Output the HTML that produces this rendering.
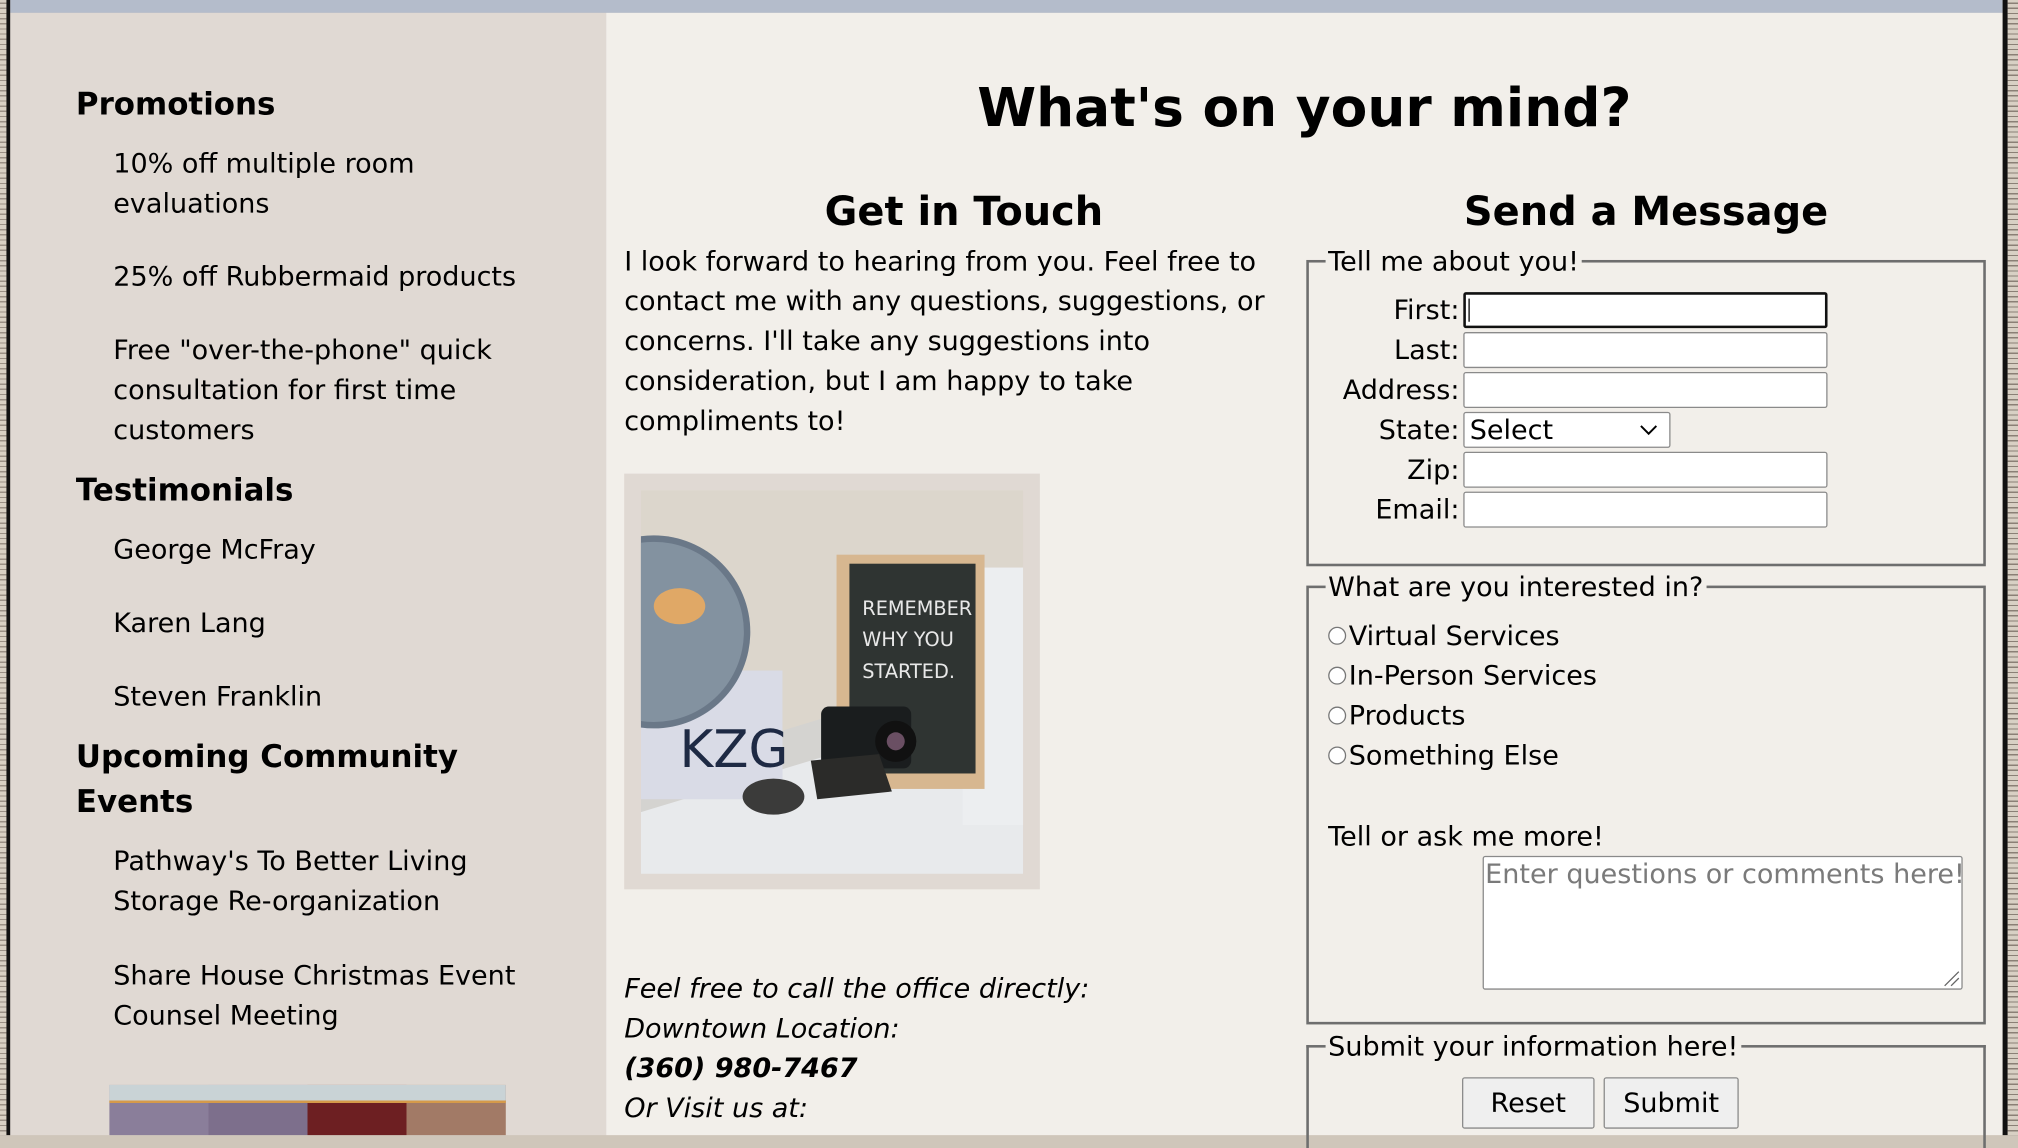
<!DOCTYPE html>
<html><head><meta charset="utf-8"><style>
html,body{margin:0;padding:0;width:2018px;height:1135px;overflow:hidden;background:#cfc6ba;}
#s{position:absolute;left:0;top:0;width:1568px;height:882px;transform:scale(1.28699);transform-origin:0 0;font-family:"DejaVu Sans","Liberation Sans",sans-serif;color:#000;font-size:21px;}
.a{position:absolute;white-space:nowrap;line-height:30px;}
.b{font-weight:bold}
.i{font-style:italic}
.h{font-size:24px}
.inp{position:absolute;background:#fff;border:1px solid #8a8a8a;border-radius:2px;box-sizing:border-box;height:28px;left:1137px;width:283px;}
.fs{position:absolute;border:2px solid #6e6e6e;border-bottom:none;box-sizing:border-box;left:1015px;width:528px;}
.lg{position:absolute;background:#f2efea;padding:0 2px;}
.rad{position:absolute;left:1032px;width:14px;height:14px;border:1px solid #777;border-radius:50%;box-sizing:border-box;background:#fff;}
.btn{position:absolute;top:837px;height:40px;background:#efefef;border:1px solid #8a8a8a;border-radius:2px;box-sizing:border-box;text-align:center;line-height:38px;font-size:21px;}
</style></head><body><div id="s">
<div style="position:absolute;left:0;top:0;width:5px;height:882px;background:repeating-linear-gradient(0deg,#d8d0c4 0 3px,#9a9086 3px 4px);"></div>
<div style="position:absolute;left:5px;top:0;width:3px;height:882px;background:#111"></div>
<div style="position:absolute;left:1556px;top:0;width:4px;height:882px;background:#111"></div>
<div style="position:absolute;left:1560px;top:0;width:8px;height:882px;background:repeating-linear-gradient(0deg,#d8d0c4 0 3px,#8a8076 3px 4px);"></div>
<div style="position:absolute;left:8px;top:0;width:1548px;height:10px;background:#b4bccb"></div>
<div style="position:absolute;left:8px;top:10px;width:463px;height:872px;background:#e0d9d3"></div>
<div style="position:absolute;left:471px;top:10px;width:1085px;height:872px;background:#f2efea"></div>

<div class="a b h" style="left:59px;top:66px">Promotions</div>
<div class="a" style="left:88px;top:112px">10% off multiple room</div>
<div class="a" style="left:88px;top:143px">evaluations</div>
<div class="a" style="left:88px;top:200px">25% off Rubbermaid products</div>
<div class="a" style="left:88px;top:257px">Free "over-the-phone" quick</div>
<div class="a" style="left:88px;top:288px">consultation for first time</div>
<div class="a" style="left:88px;top:319px">customers</div>
<div class="a b h" style="left:59px;top:366px">Testimonials</div>
<div class="a" style="left:88px;top:412px">George McFray</div>
<div class="a" style="left:88px;top:469px">Karen Lang</div>
<div class="a" style="left:88px;top:526px">Steven Franklin</div>
<div class="a b h" style="left:59px;top:571px;line-height:35px">Upcoming Community<br>Events</div>
<div class="a" style="left:88px;top:654px">Pathway's To Better Living</div>
<div class="a" style="left:88px;top:685px">Storage Re-organization</div>
<div class="a" style="left:88px;top:743px">Share House Christmas Event</div>
<div class="a" style="left:88px;top:774px">Counsel Meeting</div>
<div style="position:absolute;left:85px;top:843px;width:308px;height:39px;background:linear-gradient(#c9d3d6 0 12px,#d59a4a 12px 14px,transparent 14px),linear-gradient(90deg,#8a7e9a 0 25%,#7d6f8c 25% 50%,#6d1f22 50% 75%,#a27a66 75%);"></div>

<div class="a b" style="left:471px;width:1085px;text-align:center;top:62px;font-size:41.5px;line-height:44px">What's on your mind?</div>
<div class="a b" style="left:485px;width:528px;text-align:center;top:146px;font-size:31px;line-height:38px">Get in Touch</div>
<div class="a b" style="left:1015px;width:528px;text-align:center;top:146px;font-size:31px;line-height:38px">Send a Message</div>
<div class="a" style="left:485px;top:188px">I look forward to hearing from you. Feel free to</div>
<div class="a" style="left:485px;top:219px">contact me with any questions, suggestions, or</div>
<div class="a" style="left:485px;top:250px">concerns. I'll take any suggestions into</div>
<div class="a" style="left:485px;top:281px">consideration, but I am happy to take</div>
<div class="a" style="left:485px;top:312px">compliments to!</div>

<div style="position:absolute;left:485px;top:368px;width:323px;height:323px;background:#e0d9d3"></div>
<svg style="position:absolute;left:498px;top:381px" width="297" height="298" viewBox="0 0 297 298">
<rect width="297" height="298" fill="#dcd6cc"/>
<polygon points="0,240 297,160 297,298 0,298" fill="#e8eaec"/>
<polygon points="0,220 297,130 297,160 0,250" fill="#d4d3d0"/>
<rect x="250" y="60" width="47" height="200" fill="#eceef0"/>
<rect x="152" y="50" width="115" height="182" fill="#d7b790"/>
<rect x="162" y="57" width="98" height="163" fill="#2f3432"/>
<text x="172" y="97" fill="#e8e8e8" font-size="15" font-family="DejaVu Sans">REMEMBER</text>
<text x="172" y="121" fill="#e8e8e8" font-size="15" font-family="DejaVu Sans">WHY YOU</text>
<text x="172" y="146" fill="#e8e8e8" font-size="15" font-family="DejaVu Sans">STARTED.</text>
<rect x="0" y="140" width="110" height="100" fill="#d9dbe6"/>
<text x="30" y="215" fill="#1e2a44" font-size="40" font-family="DejaVu Sans">KZG</text>
<circle cx="10" cy="110" r="75" fill="#6a7888"/>
<circle cx="10" cy="110" r="70" fill="#8f9cab" opacity=".7"/>
<ellipse cx="30" cy="90" rx="20" ry="14" fill="#e0a866"/>
<rect x="140" y="168" width="70" height="48" rx="6" fill="#1a1d1e"/>
<circle cx="198" cy="195" r="16" fill="#111"/><circle cx="198" cy="195" r="7" fill="#6a4f63"/>
<polygon points="132,210 185,205 195,234 137,240" fill="#2b2b29"/>
<ellipse cx="103" cy="238" rx="24" ry="14" fill="#3b3b3a"/>
</svg>

<div class="a i" style="left:485px;top:753px">Feel free to call the office directly:</div>
<div class="a i" style="left:485px;top:784px">Downtown Location:</div>
<div class="a i b" style="left:485px;top:815px">(360) 980-7467</div>
<div class="a i" style="left:485px;top:846px">Or Visit us at:</div>

<div class="fs" style="top:202px;height:238px;border-bottom:2px solid #6e6e6e"></div>
<div class="a lg" style="left:1030px;top:188px">Tell me about you!</div>
<div class="a" style="left:1015px;width:119px;text-align:right;top:226px">First:</div>
<div class="a" style="left:1015px;width:119px;text-align:right;top:257px">Last:</div>
<div class="a" style="left:1015px;width:119px;text-align:right;top:288px">Address:</div>
<div class="a" style="left:1015px;width:119px;text-align:right;top:319px">State:</div>
<div class="a" style="left:1015px;width:119px;text-align:right;top:350px">Zip:</div>
<div class="a" style="left:1015px;width:119px;text-align:right;top:381px">Email:</div>
<div class="inp" style="top:227px;border:2px solid #111"><div style="position:absolute;left:2px;top:3px;width:1px;height:18px;background:#000"></div></div>
<div class="inp" style="top:258px"></div>
<div class="inp" style="top:289px"></div>
<div class="inp" style="top:320px;width:161px"><span class="a" style="left:4px;top:-2px">Select</span>
<svg style="position:absolute;left:136px;top:9px" width="14" height="9"><path d="M1 1 L7 7 L13 1" fill="none" stroke="#000" stroke-width="1.5"/></svg></div>
<div class="inp" style="top:351px"></div>
<div class="inp" style="top:382px"></div>

<div class="fs" style="top:455px;height:341px;border-bottom:2px solid #6e6e6e"></div>
<div class="a lg" style="left:1030px;top:441px">What are you interested in?</div>
<div class="rad" style="top:487px"></div><div class="a" style="left:1048px;top:479px">Virtual Services</div>
<div class="rad" style="top:518px"></div><div class="a" style="left:1048px;top:510px">In-Person Services</div>
<div class="rad" style="top:549px"></div><div class="a" style="left:1048px;top:541px">Products</div>
<div class="rad" style="top:580px"></div><div class="a" style="left:1048px;top:572px">Something Else</div>
<div class="a" style="left:1032px;top:635px">Tell or ask me more!</div>
<div style="position:absolute;left:1152px;top:665px;width:373px;height:104px;background:#fff;border:1px solid #8a8a8a;border-radius:2px;box-sizing:border-box">
<span class="a" style="left:1px;top:-2px;color:#7a7a7a">Enter questions or comments here!</span>
<svg style="position:absolute;right:1px;bottom:1px" width="14" height="14"><path d="M2 13 L13 2 M7 13 L13 7" stroke="#666" stroke-width="1"/></svg></div>

<div class="fs" style="top:812px;height:80px"></div>
<div class="a lg" style="left:1030px;top:798px">Submit your information here!</div>
<div class="btn" style="left:1136px;width:103px">Reset</div>
<div class="btn" style="left:1246px;width:105px">Submit</div>
</div></body></html>
